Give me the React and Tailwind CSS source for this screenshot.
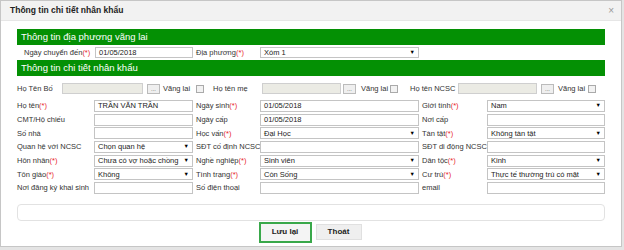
import React from 'react';

const Req = () => <span className="text-[#e8262b]">(*)</span>;

const Label = ({ text, req, className = '' }) => (
  <div className={`flex items-center whitespace-nowrap text-[#333] text-[7.5px] ${className}`}>
    {text}
    {req && <Req />}
  </div>
);

const Input = ({ value = '', disabled = false, className = '' }) => (
  <div
    className={`flex items-center h-full border px-[3px] text-[#222] whitespace-nowrap overflow-hidden ${
      disabled ? 'bg-[#ebebe4] border-[#cfcfcf]' : 'bg-white border-[#c4c4c4]'
    } ${className}`}
  >
    {value}
  </div>
);

const Select = ({ value }) => (
  <div className="flex items-center justify-between h-full border border-[#c4c4c4] bg-white pl-[3px] pr-[3px] text-[#222] whitespace-nowrap">
    <span>{value}</span>
    <span className="text-[5.5px] text-black leading-none">▼</span>
  </div>
);

const GreenBar = ({ title }) => (
  <div className="h-[16px] bg-[#049004] text-white text-[9.5px] flex items-center pl-[4px]">{title}</div>
);

const Checkbox = () => (
  <div className="w-[8px] h-[8px] border border-[#aaa] bg-[#f2f2f2]"></div>
);

const DotsBtn = ({ className = '' }) => (
  <div className={`w-[13px] h-[10px] border border-[#bbb] bg-[#efefef] text-[#555] text-[6px] flex items-end justify-center leading-[7px] ${className}`}>
    ...
  </div>
);

// hàng thông tin người thân
const Relative = ({ label, labelW, inputW, btnMl, textMl, textW }) => (
  <div className="flex items-center h-full text-[7.5px]">
    <div className="text-[#333] whitespace-nowrap" style={{ width: labelW }}>{label}</div>
    <div className="h-full" style={{ width: inputW }}>
      <Input disabled />
    </div>
    <DotsBtn className={btnMl} />
    <div className={`text-[#333] whitespace-nowrap ${textMl}`} style={{ width: textW }}>Vãng lai</div>
    <Checkbox />
  </div>
);

const rows = [
  [
    { label: 'Họ tên', req: true, input: 'TRẦN VĂN TRẦN' },
    { label: 'Ngày sinh', req: true, input: '01/05/2018' },
    { label: 'Giới tính', req: true, select: 'Nam' },
  ],
  [
    { label: 'CMT/Hộ chiếu', input: '' },
    { label: 'Ngày cấp', input: '01/05/2018' },
    { label: 'Nơi cấp', input: '' },
  ],
  [
    { label: 'Số nhà', input: '' },
    { label: 'Học vấn', req: true, select: 'Đại Học' },
    { label: 'Tàn tật', req: true, select: 'Không tàn tật' },
  ],
  [
    { label: 'Quan hệ với NCSC', select: 'Chọn quan hệ' },
    { label: 'SĐT cố định NCSC', input: '' },
    { label: 'SĐT di động NCSC', input: '' },
  ],
  [
    { label: 'Hôn nhân', req: true, select: 'Chưa có vợ hoặc chồng' },
    { label: 'Nghề nghiệp', req: true, select: 'Sinh viên' },
    { label: 'Dân tộc', req: true, select: 'Kinh' },
  ],
  [
    { label: 'Tôn giáo', req: true, select: 'Không' },
    { label: 'Tình trạng', req: true, select: 'Còn Sống' },
    { label: 'Cư trú', req: true, select: 'Thực tế thường trú có mặt' },
  ],
  [
    { label: 'Nơi đăng ký khai sinh', input: '' },
    { label: 'Số điện thoại', input: '' },
    { label: 'email', input: '' },
  ],
];

export default function App() {
  return (
    <div
      className="w-[624px] h-[250px] bg-[#e4e4e4] overflow-hidden text-[7.5px] leading-none"
      style={{ fontFamily: '"Liberation Sans", Arial, sans-serif' }}
    >
      <div className="w-[622px] h-[247px] bg-white border border-[#c6c6c6] flex flex-col">
        {/* Tiêu đề */}
        <div className="h-[20px] shrink-0 bg-[#f2f2f2] border-b border-[#e6e6e6] flex items-center justify-between pl-[9px] pr-[7px]">
          <span className="font-bold text-[#222] text-[8.5px]">Thông tin chi tiết nhân khẩu</span>
          <span className="text-[#999] text-[10px]">×</span>
        </div>

        <div className="px-[16px] pt-[8px] flex flex-col">
          <GreenBar title="Thông tin địa phương vãng lai" />

          <div className="mt-[2px] h-[11px] grid grid-cols-[78px_98px_67px_159px_68px_118px]">
            <Label text="Ngày chuyển đến" req className="pl-[7px]" />
            <Input value="01/05/2018" />
            <Label text="Địa phương" req className="pl-[3px]" />
            <Select value="Xóm 1" />
          </div>

          <div className="mt-[2px]">
            <GreenBar title="Thông tin chi tiết nhân khẩu" />
          </div>

          {/* Bố, mẹ, NCSC */}
          <div className="mt-[7px] h-[11px] grid grid-cols-[196px_197px_195px]">
            <Relative label="Họ Tên Bố" labelW={45} inputW={81} btnMl="ml-[4px]" textMl="ml-[3px]" textW={33} />
            <Relative label="Họ tên mẹ" labelW={49} inputW={79} btnMl="ml-[2px]" textMl="ml-[5px]" textW={29} />
            <Relative label="Họ tên NCSC" labelW={48} inputW={79} btnMl="ml-[4px]" textMl="ml-[4px]" textW={30} />
          </div>

          {/* Thông tin chính */}
          <div className="mt-[6px] grid grid-cols-[77px_99px_67px_159px_68px_118px] auto-rows-[12px] gap-y-[1.67px]">
            {rows.map((row, i) =>
              row.map((cell, j) => (
                <React.Fragment key={`${i}-${j}`}>
                  <Label text={cell.label} req={cell.req} className={j === 0 ? '' : 'pl-[3px]'} />
                  {cell.select !== undefined ? <Select value={cell.select} /> : <Input value={cell.input} />}
                </React.Fragment>
              ))
            )}
          </div>

          <div className="mt-[10px] h-[17px] border border-[#e2e2e2] rounded-[4px]"></div>

          <div className="mt-[1px] flex justify-center items-center gap-[4px] pr-[2px] text-[8px]">
            <div className="w-[53px] h-[21px] border-2 border-[#39a84a] bg-[#f4f4f4] flex items-center justify-center font-bold text-[#222]">
              Lưu lại
            </div>
            <div className="w-[46px] h-[16px] border border-[#e0e0e0] bg-[#efefef] flex items-center justify-center font-bold text-[#222]">
              Thoát
            </div>
          </div>
        </div>
      </div>
    </div>
  );
}
